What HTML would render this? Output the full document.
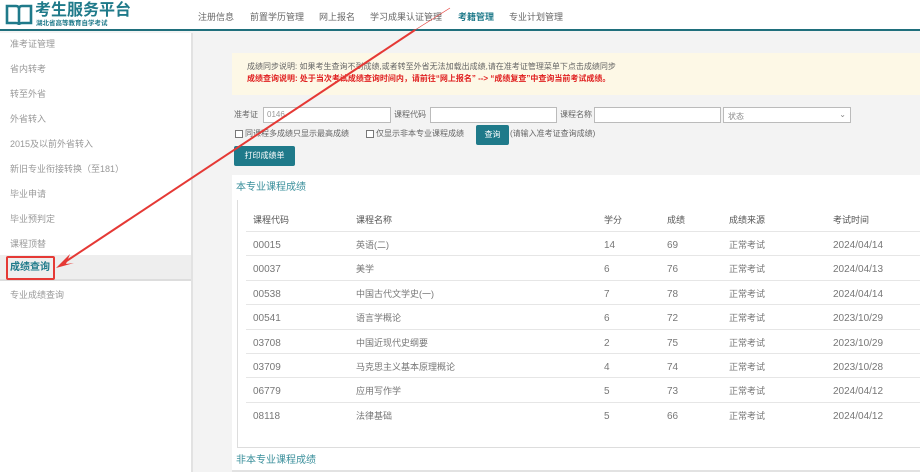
<!DOCTYPE html>
<html><head><meta charset="utf-8"><style>
*{margin:0;padding:0;box-sizing:border-box}
body{width:920px;height:472px;overflow:hidden;background:#f3f3f3;font-family:"Liberation Sans","Noto Sans CJK SC",sans-serif;position:relative;color:#555}
.hdr{position:absolute;left:0;top:0;width:920px;height:31px;background:#fff;border-bottom:2px solid #1f6f7c}
.logo{position:absolute;left:35px;top:2px;font-size:16px;line-height:18px;font-weight:bold;color:#1f7a8a;white-space:nowrap}
.logo small{position:absolute;left:1px;top:18px;font-size:6.5px;line-height:8px;color:#1f7a8a;white-space:nowrap;font-weight:bold}
.nav{position:absolute;top:10px;font-size:9px;color:#666}
.side{position:absolute;left:0;top:33px;width:193px;height:439px;background:#fff;border-right:2px solid #e2e2e2}
.si{position:absolute;left:10px;font-size:9px;line-height:12px;color:#999}
.t{position:absolute;font-size:9px;line-height:12px;color:#666;white-space:nowrap}
.num{color:#777;line-height:14px}
input.f{position:absolute;height:16px;border:1px solid #bbb;background:#fff}
</style></head><body>
<div class="hdr">
<svg style="position:absolute;left:5px;top:3px" width="28" height="25" viewBox="0 0 28 25"><path d="M2 3h9q3 0 3 3v16q0-2-3-2H2z M26 3h-9q-3 0-3 3v16q0-2 3-2h9z" fill="none" stroke="#1f7a8a" stroke-width="2.6"/></svg>
<div class="logo">考生服务平台<small>湖北省高等教育自学考试</small></div>
<div class="nav" style="left:198px">注册信息</div>
<div class="nav" style="left:250px">前置学历管理</div>
<div class="nav" style="left:319px">网上报名</div>
<div class="nav" style="left:370px">学习成果认证管理</div>
<div class="nav" style="left:458px;color:#1f7a8a;font-weight:bold">考籍管理</div>
<div class="nav" style="left:509px">专业计划管理</div>
</div>
<div class="side">
<div class="si" style="top:5px">准考证管理</div>
<div class="si" style="top:30px">省内转考</div>
<div class="si" style="top:55px">转至外省</div>
<div class="si" style="top:80px">外省转入</div>
<div class="si" style="top:105px">2015及以前外省转入</div>
<div class="si" style="top:130px">新旧专业衔接转换（至181）</div>
<div class="si" style="top:155px">毕业申请</div>
<div class="si" style="top:180px">毕业预判定</div>
<div class="si" style="top:205px">课程顶替</div>
<div style="position:absolute;left:0;top:222px;width:191px;height:26px;background:#eee;border-bottom:2px solid #ddd"></div>
<div style="position:absolute;left:6px;top:223px;width:49px;height:24px;border:2px solid #e53935;border-radius:2px"></div>
<div class="si" style="top:229px;color:#1f7a8a;font-weight:bold;font-size:10px">成绩查询</div>
<div class="si" style="top:256px">专业成绩查询</div>
</div>
<div style="position:absolute;left:232px;top:53px;width:688px;height:42px;background:#fdf8e6"></div>
<div class="t" style="left:247px;top:61px;font-size:8px">成绩同步说明: 如果考生查询不到成绩,或者转至外省无法加载出成绩,请在准考证管理菜单下点击成绩同步</div>
<div class="t" style="left:247px;top:73px;font-size:8px;color:#e02020;font-weight:bold">成绩查询说明: 处于当次考试成绩查询时间内，请前往“网上报名” --> “成绩复查”中查询当前考试成绩。</div>
<div class="t" style="left:234px;top:109px;font-size:8px">准考证</div>
<input class="f" style="left:263px;top:107px;width:128px">
<div class="t" style="left:267px;top:109px;font-size:8px;color:#999">0146.</div>
<div class="t" style="left:394px;top:109px;font-size:8px">课程代码</div>
<input class="f" style="left:430px;top:107px;width:127px">
<div class="t" style="left:560px;top:109px;font-size:8px">课程名称</div>
<input class="f" style="left:594px;top:107px;width:127px">
<div style="position:absolute;left:723px;top:107px;width:128px;height:16px;border:1px solid #bbb;background:#fff;font-size:8px;color:#888;padding:3px 4px">状态<span style="position:absolute;right:4px;top:2px">⌄</span></div>
<div style="position:absolute;left:235px;top:130px;width:8px;height:8px;border:1px solid #777;background:#fff"></div>
<div class="t" style="left:245px;top:128px;font-size:8px">同课程多成绩只显示最高成绩</div>
<div style="position:absolute;left:366px;top:130px;width:8px;height:8px;border:1px solid #777;background:#fff"></div>
<div class="t" style="left:376px;top:128px;font-size:8px">仅显示非本专业课程成绩</div>
<div style="position:absolute;left:476px;top:125px;width:33px;height:20px;background:#1f7a8a;border-radius:2px;color:#fff;font-size:8px;text-align:center;line-height:20px">查询</div>
<div class="t" style="left:510px;top:128px;font-size:8px">(请输入准考证查询成绩)</div>
<div style="position:absolute;left:234px;top:146px;width:61px;height:20px;background:#1f7a8a;border-radius:2px;color:#fff;font-size:8px;text-align:center;line-height:20px">打印成绩单</div>
<div style="position:absolute;left:232px;top:175px;width:688px;height:297px;background:#fff"></div>
<div class="t" style="left:236px;top:181px;font-size:10px;line-height:14px;color:#3a8f9b">本专业课程成绩</div>
<div style="position:absolute;left:237px;top:200px;width:683px;height:248px;border-left:1px solid #ddd;border-bottom:1px solid #ddd"></div>
<div class="t" style="left:253px;top:214px;color:#555">课程代码</div>
<div class="t" style="left:356px;top:214px;color:#555">课程名称</div>
<div class="t" style="left:604px;top:214px;color:#555">学分</div>
<div class="t" style="left:667px;top:214px;color:#555">成绩</div>
<div class="t" style="left:729px;top:214px;color:#555">成绩来源</div>
<div class="t" style="left:833px;top:214px;color:#555">考试时间</div>
<div id="rows"></div>
<div style="position:absolute;left:232px;top:449px;width:688px;height:23px;background:#fff;border-bottom:2px solid #e2e2e2"></div>
<div class="t" style="left:236px;top:454px;font-size:10px;line-height:14px;color:#3a8f9b">非本专业课程成绩</div>
<script>
var d=[["00015","英语(二)","14","69","2024/04/14"],["00037","美学","6","76","2024/04/13"],["00538","中国古代文学史(一)","7","78","2024/04/14"],["00541","语言学概论","6","72","2023/10/29"],["03708","中国近现代史纲要","2","75","2023/10/29"],["03709","马克思主义基本原理概论","4","74","2023/10/28"],["06779","应用写作学","5","73","2024/04/12"],["08118","法律基础","5","66","2024/04/12"]];
var h="";d.forEach(function(r,i){var y=232+i*24.4;
h+='<div style="position:absolute;left:246px;top:'+(y-1)+'px;width:674px;border-top:1px solid #e6e6e6"></div>';
var c=[253,356,604,667,729,833],v=[r[0],r[1],r[2],r[3],"正常考试",r[4]];
c.forEach(function(x,j){var cj=(j==1||j==4);h+='<div class="t num" style="left:'+x+'px;top:'+(y+(cj?6:7))+'px;font-size:'+(cj?9:10)+'px">'+v[j]+'</div>';});});
document.getElementById("rows").innerHTML=h;
</script>
<svg style="position:absolute;left:0;top:0" width="920" height="472"><line x1="415" y1="30" x2="62" y2="264" stroke="#e53935" stroke-width="2"/><line x1="415" y1="30" x2="450" y2="8" stroke="#e53935" stroke-width="0.6"/><path d="M56 268 L70 254 L66 264 L74 263 Z" fill="#e53935"/></svg>
</body></html>
